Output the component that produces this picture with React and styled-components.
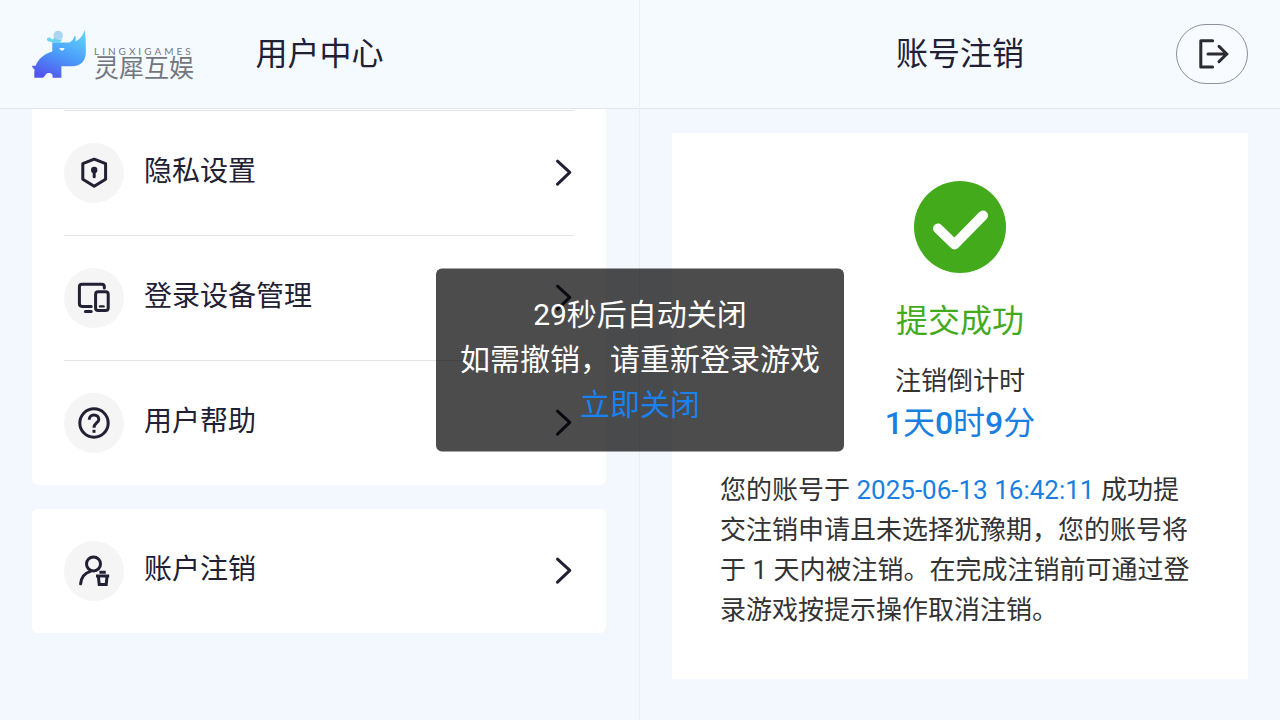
import React from "react";
import styled, { createGlobalStyle } from "styled-components";

const GlobalStyle = createGlobalStyle`
  *, *::before, *::after { box-sizing: border-box; }
  body {
    margin: 0;
    background: #f3f8ff;
    color: #222034;
    font-family: Roboto, "Noto Sans CJK SC", sans-serif;
  }
  h1, h2, p { margin: 0; font-weight: 400; }
`;

const Page = styled.div`
  position: relative;
  display: grid;
  grid-template-columns: 1fr 1fr;
  min-height: 100vh;
  overflow: hidden;
`;

const Panel = styled.section`
  display: flex;
  flex-direction: column;
  border-right: ${(p) => (p.$divided ? "1px solid #e9eff5" : "0")};
`;

const Header = styled.header`
  display: grid;
  grid-template-columns: 1fr auto 1fr;
  align-items: center;
  padding: 24px 32px;
  background: #f5faff;
  border-bottom: 1px solid #e2e6ec;
`;

const Title = styled.h1`
  grid-column: 2;
  font-size: 32px;
  line-height: 60px;
`;

const Brand = styled.div`
  display: flex;
  align-items: center;
  gap: 8px;
`;

const BrandText = styled.div`
  display: flex;
  flex-direction: column;
  padding-top: 19px;
  color: #73777d;
  white-space: nowrap;
`;

const BrandLatin = styled.span`
  font-family: Lato, sans-serif;
  font-size: 10px;
  line-height: 10px;
  letter-spacing: 3px;
`;

const BrandName = styled.span`
  font-size: 25px;
  line-height: 25px;
`;

const ExitButton = styled.button`
  justify-self: end;
  display: flex;
  align-items: center;
  justify-content: center;
  width: 72px;
  height: 60px;
  padding: 0;
  border: 1px solid #8d8f9c;
  border-radius: 30px;
  background: #f8fbff;
  color: #2b2b33;
`;

const Menu = styled.nav`
  display: flex;
  flex-direction: column;
  gap: 24px;
  padding: 0 33px 24px 32px;
`;

const MenuCard = styled.div`
  padding: ${(p) => (p.$continued ? "1px 32px 0" : "0 32px")};
  border-radius: ${(p) => (p.$continued ? "0 0 6px 6px" : "6px")};
  background: #fff;
`;

const MenuRow = styled.a`
  display: flex;
  align-items: center;
  gap: 20px;
  height: ${(p) => (p.$line ? "125px" : "124px")};
  border-top: ${(p) => (p.$line ? "1px solid #e4e4e6" : "0")};
  color: inherit;
  text-decoration: none;
`;

const IconDisc = styled.span`
  display: flex;
  flex: none;
  width: 60px;
  height: 60px;
  border-radius: 50%;
  background: #f5f5f5;
`;

const MenuLabel = styled.span`
  flex: 1;
  font-size: 28px;
  line-height: 40px;
  padding-bottom: 3px;
`;

const Result = styled.main`
  margin: 24px 32px;
  padding: 48px 48px 49px;
  background: #fff;
  display: flex;
  flex-direction: column;
  align-items: center;
`;

const ResultTitle = styled.h2`
  margin-top: 24px;
  font-size: 32px;
  line-height: 48px;
  color: #43aa1c;
`;

const CountLabel = styled.p`
  margin-top: 16px;
  font-size: 26px;
  line-height: 40px;
  color: #333;
`;

const Countdown = styled.p`
  font-size: 32px;
  line-height: 45px;
  color: #1a7fe0;

  b { font-weight: 500; }
`;

const Notice = styled.p`
  align-self: stretch;
  margin-top: 24px;
  font-size: 26px;
  line-height: 40px;
  color: #333;

  time { color: #1a7fe0; }
`;

const Toast = styled.div`
  position: absolute;
  top: 50%;
  left: 50%;
  transform: translate(-50%, -50%);
  display: flex;
  flex-direction: column;
  align-items: center;
  padding: 23px 24px 25px;
  border-radius: 6px;
  background: rgba(0, 0, 0, 0.7);
  color: #fff;
  font-size: 30px;
  line-height: 45px;
  white-space: nowrap;
`;

const ToastLink = styled.a`
  color: #1a82f0;
  text-decoration: none;
`;

const Icon = ({ children, size = 60, width = 3 }) => (
  <svg width={size} height={size} viewBox={`0 0 ${size} ${size}`} fill="none" stroke="currentColor"
    strokeWidth={width} strokeLinecap="round" strokeLinejoin="round" aria-hidden="true">
    {children}
  </svg>
);

const PrivacyIcon = () => (
  <Icon>
    <path d="M30.2 16.2 41.6 20.7V36.2L30.2 43.3 18.8 36.2V20.7Z" />
    <circle cx="30.2" cy="27" r="3.2" fill="currentColor" stroke="none" />
    <path d="M30.2 28V33.8" />
  </Icon>
);

const DevicesIcon = () => (
  <Icon>
    <path d="M40.3 20V18.6Q40.3 16.2 37.8 16.2H18Q15.4 16.2 15.4 18.8V35.8Q15.4 38.4 18 38.4H27.2M21.4 43.4H27.2" />
    <rect x="31.6" y="23.8" width="12.6" height="18.8" rx="2.6" />
    <path d="M36 38.4H39.6" strokeWidth="2.4" />
  </Icon>
);

const HelpIcon = () => (
  <Icon>
    <circle cx="30" cy="30" r="14.2" />
    <path d="M25.2 26.8C25.2 23.8 27.2 22 29.9 22C32.8 22 34.8 23.7 34.8 26.4C34.8 29.6 30 30 30 34.8" strokeLinecap="butt" />
    <path d="M30 36.8V39.8" strokeLinecap="butt" />
  </Icon>
);

const AccountIcon = () => (
  <Icon>
    <circle cx="29.5" cy="22.9" r="7" />
    <path d="M16.6 42.8C17.3 36.4 21 32 26.4 30.4" />
    <path d="M32 34.9H45.2M35.4 31.2H41.8" strokeLinecap="butt" />
    <path d="M34.4 35.5 35.2 43.5H42.2L43 35.5" strokeLinejoin="miter" />
  </Icon>
);

const Chevron = () => (
  <svg width="20" height="30" viewBox="0 0 20 30" fill="none" stroke="currentColor" strokeWidth="3"
    strokeLinecap="round" strokeLinejoin="round" aria-hidden="true">
    <path d="M3.5 3.2 15.8 14.4 3.5 26.2" />
  </svg>
);

const BrandMark = () => (
  <svg width="54" height="50" viewBox="0 0 54 50" aria-hidden="true">
    <defs>
      <linearGradient id="rhino" x1="0.75" y1="0" x2="0.3" y2="1">
        <stop offset="0" stopColor="#5fd0fb" />
        <stop offset="0.5" stopColor="#4b9dfa" />
        <stop offset="1" stopColor="#5256ee" />
      </linearGradient>
    </defs>
    <path fill="url(#rhino)" d="M0 36.8H3.6C6.4 29.6 12 25 20.3 22.4V13.4H37.2C39.8 12.4 41.6 10 43 6.2C44 8.4 44 10.2 43.4 12.4C48.2 10.2 51 6.4 52.6 1C53.6 5 53.8 11 53.8 19V23C53.8 32 48.8 37.2 40 37.2H29.4V48.8H20.6V46.4C20.4 44.4 18.2 43.6 16 44C13.6 44.4 13.6 47 11 48.8H2.4C2.2 45.6 2.2 43.4 2.6 40.6C1.4 39.8 .4 38.6 0 36.8Z" />
    <circle cx="26.2" cy="6.4" r="4.7" fill="#a9d6f3" />
    <path fill="#6ed2f3" d="M15 9.4C16.6 8 18.6 8.6 19.8 10.2C21 10.4 22 9.6 22.8 8.2C24.4 11 27.2 11.8 30.4 10C29.6 11.8 28.6 13 27 14H20.3C20 12.8 18.6 13 17.2 12.6C15.6 12.2 14.8 11 15 9.4Z" />
    <path fill="#f3f8ff" d="M27.3 19H32.5C32.2 20.6 31.3 21.7 30.1 21.7C28.8 21.7 27.9 20.6 27.3 19Z" />
  </svg>
);

const mainItems = [
  { label: "隐私设置", Glyph: PrivacyIcon },
  { label: "登录设备管理", Glyph: DevicesIcon },
  { label: "用户帮助", Glyph: HelpIcon },
];

const MenuItem = ({ label, Glyph, line }) => (
  <MenuRow href="#" $line={line}>
    <IconDisc><Glyph /></IconDisc>
    <MenuLabel>{label}</MenuLabel>
    <Chevron />
  </MenuRow>
);

export default function App() {
  return (
    <>
      <GlobalStyle />
      <Page>
        <Panel $divided>
          <Header>
            <Brand>
              <BrandMark />
              <BrandText>
                <BrandLatin>LINGXIGAMES</BrandLatin>
                <BrandName>灵犀互娱</BrandName>
              </BrandText>
            </Brand>
            <Title>用户中心</Title>
          </Header>
          <Menu>
            <MenuCard $continued>
              {mainItems.map((item) => (
                <MenuItem key={item.label} {...item} line />
              ))}
            </MenuCard>
            <MenuCard>
              <MenuItem label="账户注销" Glyph={AccountIcon} />
            </MenuCard>
          </Menu>
        </Panel>
        <Panel>
          <Header>
            <Title>账号注销</Title>
            <ExitButton type="button" aria-label="退出">
              <svg width="36" height="36" viewBox="0 0 36 36" fill="none" stroke="currentColor" strokeWidth="3"
                strokeLinecap="round" strokeLinejoin="round" aria-hidden="true">
                <path d="M18.6 4.8H6.8V31H18.6M14 18H33M25 10.4 32.8 18 25 25.6" />
              </svg>
            </ExitButton>
          </Header>
          <Result>
            <svg width="92" height="92" viewBox="0 0 92 92" fill="none" aria-hidden="true">
              <circle cx="46" cy="46" r="46" fill="#43aa1c" />
              <path d="M24 47.5 40.5 63.5 69 34.5" stroke="#fff" strokeWidth="10" strokeLinecap="round" strokeLinejoin="round" />
            </svg>
            <ResultTitle>提交成功</ResultTitle>
            <CountLabel>注销倒计时</CountLabel>
            <Countdown><b>1</b>天<b>0</b>时<b>9</b>分</Countdown>
            <Notice>
              您的账号于 <time dateTime="2025-06-13T16:42:11">2025-06-13 16:42:11</time> 成功提交注销申请且未选择犹豫期，您的账号将于 1 天内被注销。在完成注销前可通过登录游戏按提示操作取消注销。
            </Notice>
          </Result>
        </Panel>
        <Toast role="status">
          <span>29秒后自动关闭</span>
          <span>如需撤销，请重新登录游戏</span>
          <ToastLink href="#">立即关闭</ToastLink>
        </Toast>
      </Page>
    </>
  );
}
